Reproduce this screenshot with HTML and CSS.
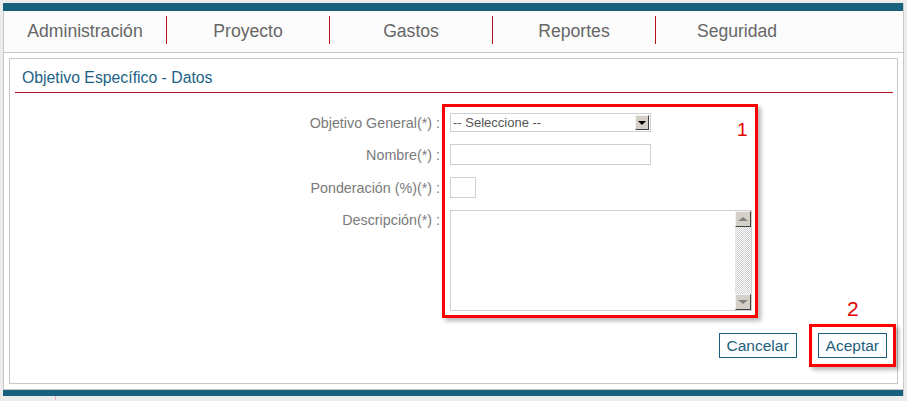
FILE: index.html
```html
<!DOCTYPE html>
<html lang="es">
<head>
<meta charset="utf-8">
<title>Objetivo Específico - Datos</title>
<link rel="stylesheet" href="styles.css">
</head>
<body>
<div class="page">
  <div class="topbar"></div>
  <nav class="nav">
    <a class="nav-item">Administración</a>
    <a class="nav-item">Proyecto</a>
    <a class="nav-item">Gastos</a>
    <a class="nav-item">Reportes</a>
    <a class="nav-item">Seguridad</a>
  </nav>
  <div class="content">
    <section class="panel">
      <h1 class="panel-title">Objetivo Específico - Datos</h1>
      <div class="form">
        <label class="label">Objetivo General(*) :</label>
        <div class="select">
          <span class="select-text">-- Seleccione --</span>
          <span class="select-btn"><span class="tri-down-black"></span></span>
        </div>
        <label class="label">Nombre(*) :</label>
        <div class="input input-wide"></div>
        <label class="label">Ponderación (%)(*) :</label>
        <div class="input input-small"></div>
        <label class="label label-top">Descripción(*) :</label>
        <div class="textarea">
          <div class="scrollbar">
            <span class="sb-btn"><span class="tri-up"></span></span>
            <span class="sb-track"></span>
            <span class="sb-btn"><span class="tri-down"></span></span>
          </div>
        </div>
      </div>
      <div class="actions">
        <button class="btn">Cancelar</button>
        <button class="btn">Aceptar</button>
      </div>
    </section>
  </div>
  <div class="bottombar"></div>
  <div class="mark box1"></div>
  <div class="mark box2"></div>
  <span class="num num1">1</span>
  <span class="num num2">2</span>
</div>
<div class="tick"></div>
</body>
</html>
```
FILE: styles.css
```css
html, body {
  margin: 0;
  padding: 0;
}
body {
  background: #ececec;
  font-family: "Liberation Sans", Arial, sans-serif;
  width: 907px;
  height: 401px;
  overflow: hidden;
}
.page {
  position: relative;
  margin: 3px 0 0 3px;
  width: 900px;
  border-right: 1px solid #c8c8c8;
  background: #fff;
}
.topbar {
  height: 8px;
  background: #17617f;
}
.nav {
  display: flex;
  height: 41px;
  border-left: 1px solid #c8c8c8;
  border-bottom: 1px solid #c8c8c8;
  background: #fcfcfc;
}
.nav-item {
  width: 162px;
  display: flex;
  align-items: center;
  justify-content: center;
  font-size: 17.6px;
  color: #666;
  position: relative;
}
.nav-item + .nav-item {
  border-left: 1px solid transparent;
}
.nav-item + .nav-item::before {
  content: "";
  position: absolute;
  left: -1px;
  top: 5px;
  height: 28px;
  border-left: 1px solid #b3121c;
}
.content {
  border-left: 1px solid #c8c8c8;
  border-bottom: 1px solid #c8c8c8;
  padding: 5px 5px 5px 5px;
}
.panel {
  border: 1px solid #c8c8c8;
  padding: 0 4px 0 5px;
  height: 324px;
}
.panel-title {
  margin: 0;
  font-weight: normal;
  font-size: 15.8px;
  color: #1c6285;
  padding: 10px 0 0 7px;
  height: 23px;
  box-sizing: content-box;
  line-height: 18px;
  border-bottom: 1px solid #b3121c;
}
.form {
  display: grid;
  grid-template-columns: 425px 302px;
  column-gap: 10px;
  row-gap: 12px;
  align-items: center;
  margin-top: 20px;
}
.label {
  text-align: right;
  font-size: 14.3px;
  color: #7a7a7a;
}
.label-top {
  align-self: start;
  padding-top: 2px;
}
.select {
  width: 199px;
  height: 17px;
  border: 1px solid #cfcfcf;
  display: flex;
  align-items: center;
  justify-content: space-between;
  background: #fff;
}
.select-text {
  font-size: 13px;
  color: #555;
  padding-left: 2px;
}
.select-btn {
  width: 14px;
  height: 15px;
  margin-right: 1px;
  background: #d4d0c8;
  border-top: 1px solid #f4f4f4;
  border-left: 1px solid #f4f4f4;
  border-right: 1px solid #404040;
  border-bottom: 1px solid #404040;
  box-sizing: border-box;
  display: flex;
  align-items: center;
  justify-content: center;
}
.tri-down-black {
  border-left: 4px solid transparent;
  border-right: 4px solid transparent;
  border-top: 4px solid #000;
}
.input {
  height: 19px;
  border: 1px solid #cfcfcf;
  background: #fff;
}
.input-wide { width: 199px; }
.input-small { width: 24px; }
.textarea {
  width: 300px;
  height: 99px;
  border: 1px solid #cfcfcf;
  background: #fff;
  display: flex;
  justify-content: flex-end;
}
.scrollbar {
  width: 16px;
  display: flex;
  flex-direction: column;
}
.sb-btn {
  height: 16px;
  box-sizing: border-box;
  background: #d4d0c8;
  border-top: 1px solid #f4f4f4;
  border-left: 1px solid #f4f4f4;
  border-right: 1px solid #404040;
  border-bottom: 1px solid #404040;
  display: flex;
  align-items: center;
  justify-content: center;
}
.sb-track {
  flex: 1;
  background-color: #fff;
  background-image: repeating-conic-gradient(#cfcfcf 0 25%, #fff 0 50%);
  background-size: 2px 2px;
}
.tri-up {
  border-left: 5px solid transparent;
  border-right: 5px solid transparent;
  border-bottom: 4px solid #808080;
}
.tri-down {
  border-left: 5px solid transparent;
  border-right: 5px solid transparent;
  border-top: 4px solid #808080;
}
.actions {
  display: flex;
  justify-content: flex-end;
  gap: 21px;
  margin-top: 22px;
  margin-right: 6px;
}
.btn {
  font-family: "Liberation Sans", Arial, sans-serif;
  font-size: 15.5px;
  color: #1c5f7c;
  background: #fff;
  border: 1px solid #1c5f7c;
  height: 25px;
  padding: 0 7px;
  margin: 0;
  border-radius: 0;
}
.bottombar {
  height: 6px;
  background: #17617f;
}
.mark {
  position: absolute;
  border: 3px solid #f00;
  box-shadow: 3px 3px 4px rgba(0,0,0,0.28);
  box-sizing: border-box;
}
.box1 {
  left: 439px;
  top: 101px;
  width: 316px;
  height: 214px;
}
.box2 {
  left: 806px;
  top: 321px;
  width: 87px;
  height: 43px;
}
.num {
  position: absolute;
  color: #e40000;
  font-family: "Liberation Sans", Arial, sans-serif;
}
.num1 {
  left: 734px;
  top: 116px;
  font-size: 19px;
}
.num2 {
  left: 844px;
  top: 294px;
  font-size: 21px;
}
.tick {
  margin-left: 55px;
  width: 1px;
  height: 4px;
  background: #e8b4c4;
}
```
